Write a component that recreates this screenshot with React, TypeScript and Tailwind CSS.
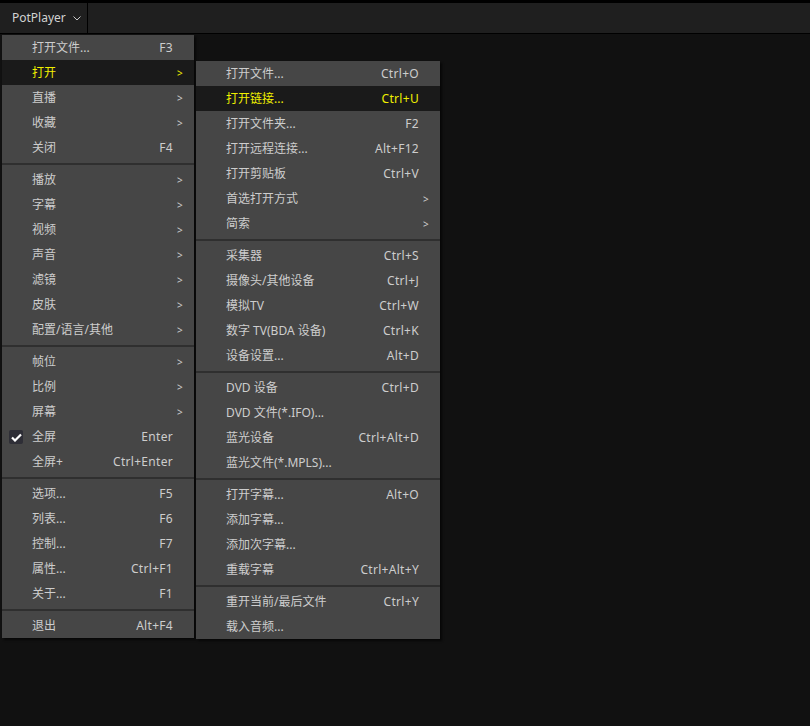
import React from "react";

type Item =
  | { sep: true }
  | { label: string; key?: string; sub?: boolean; hi?: boolean; check?: boolean; sep?: false };

const mainItems: Item[] = [
  { label: "打开文件...", key: "F3" },
  { label: "打开", sub: true, hi: true },
  { label: "直播", sub: true },
  { label: "收藏", sub: true },
  { label: "关闭", key: "F4" },
  { sep: true },
  { label: "播放", sub: true },
  { label: "字幕", sub: true },
  { label: "视频", sub: true },
  { label: "声音", sub: true },
  { label: "滤镜", sub: true },
  { label: "皮肤", sub: true },
  { label: "配置/语言/其他", sub: true },
  { sep: true },
  { label: "帧位", sub: true },
  { label: "比例", sub: true },
  { label: "屏幕", sub: true },
  { label: "全屏", key: "Enter", check: true },
  { label: "全屏+", key: "Ctrl+Enter" },
  { sep: true },
  { label: "选项...", key: "F5" },
  { label: "列表...", key: "F6" },
  { label: "控制...", key: "F7" },
  { label: "属性...", key: "Ctrl+F1" },
  { label: "关于...", key: "F1" },
  { sep: true },
  { label: "退出", key: "Alt+F4" },
];

const subItems: Item[] = [
  { label: "打开文件...", key: "Ctrl+O" },
  { label: "打开链接...", key: "Ctrl+U", hi: true },
  { label: "打开文件夹...", key: "F2" },
  { label: "打开远程连接...", key: "Alt+F12" },
  { label: "打开剪贴板", key: "Ctrl+V" },
  { label: "首选打开方式", sub: true },
  { label: "简索", sub: true },
  { sep: true },
  { label: "采集器", key: "Ctrl+S" },
  { label: "摄像头/其他设备", key: "Ctrl+J" },
  { label: "模拟TV", key: "Ctrl+W" },
  { label: "数字 TV(BDA 设备)", key: "Ctrl+K" },
  { label: "设备设置...", key: "Alt+D" },
  { sep: true },
  { label: "DVD 设备", key: "Ctrl+D" },
  { label: "DVD 文件(*.IFO)..." },
  { label: "蓝光设备", key: "Ctrl+Alt+D" },
  { label: "蓝光文件(*.MPLS)..." },
  { sep: true },
  { label: "打开字幕...", key: "Alt+O" },
  { label: "添加字幕..." },
  { label: "添加次字幕..." },
  { label: "重载字幕", key: "Ctrl+Alt+Y" },
  { sep: true },
  { label: "重开当前/最后文件", key: "Ctrl+Y" },
  { label: "载入音频..." },
];

function Menu({ items }: { items: Item[] }) {
  return (
    <div className="flex flex-col">
      {items.map((it, i) => {
        if (it.sep) {
          return (
            <div key={i} className="h-[7px] flex items-center">
              <div className="h-[2px] w-full bg-[#2f2f2f]" />
            </div>
          );
        }
        const color = it.hi ? "text-[#f0f000]" : "text-[#cdcdcd]";
        return (
          <div
            key={i}
            className={`relative h-[25px] flex items-center pl-[30px] ${it.hi ? "bg-[#1a1a1a]" : ""} ${color}`}
          >
            {it.check && (
              <div className="absolute left-[7px] top-[6px] w-[14px] h-[14px] rounded-[2px] bg-[#2e2e36] flex items-center justify-center">
                <svg width="11" height="9" viewBox="0 0 11 9">
                  <path d="M1 4.5 L4 7.5 L10 1.5" stroke="#ffffff" strokeWidth="2.2" fill="none" />
                </svg>
              </div>
            )}
            <span className="flex-1 whitespace-nowrap">{it.label}</span>
            <span className="whitespace-nowrap tracking-[0.3px]">{it.key ?? ""}</span>
            <span className="w-[21px] shrink-0 pl-[4px] text-[10px] leading-none">{it.sub ? ">" : ""}</span>
          </div>
        );
      })}
    </div>
  );
}

export default function App() {
  return (
    <div
      className="relative w-[810px] h-[726px] flex flex-col bg-[#111111] overflow-hidden text-[12px]"
      style={{ fontFamily: "'Noto Sans', 'Noto Sans CJK SC', sans-serif" }}
    >
      <div className="h-[3px] bg-black" />
      <div className="h-[31px] bg-[#1f1f1f] border-b border-black flex">
        <div className="w-[88px] h-full border-r border-black flex items-center pl-[12px] text-[#d2d2d2] gap-[7px]">
          <span>PotPlayer</span>
          <svg width="8" height="5" viewBox="0 0 8 5">
            <path d="M0.5 0.5 L4 4 L7.5 0.5" stroke="#c8c8c8" strokeWidth="1" fill="none" />
          </svg>
        </div>
      </div>
      <div className="flex-1 bg-[#111111]" />

      <div className="absolute left-[2px] top-[35px] w-[192px] bg-[#464646] shadow-[2px_2px_2px_rgba(0,0,0,0.6)]">
        <Menu items={mainItems} />
      </div>
      <div className="absolute left-[196px] top-[61px] w-[244px] bg-[#464646] shadow-[2px_2px_2px_rgba(0,0,0,0.6)]">
        <Menu items={subItems} />
      </div>
    </div>
  );
}
